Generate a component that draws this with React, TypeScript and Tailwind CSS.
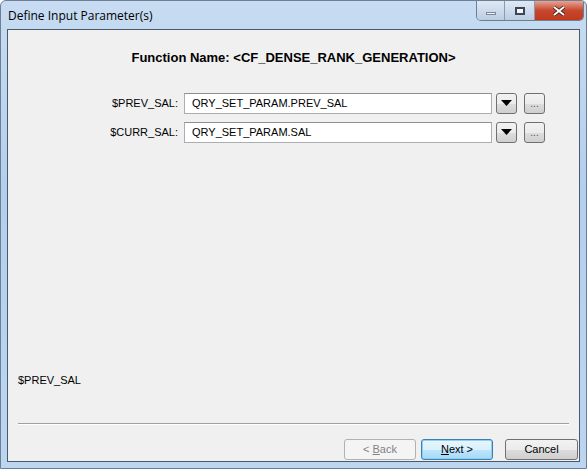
const ui = { fontFamily: '"Liberation Sans", Arial, sans-serif' };
const title = { fontFamily: '"Open Sans", "Noto Sans", sans-serif' };

function WinButton({
  children,
  width,
  variant = "normal",
}: {
  children: React.ReactNode;
  width: string;
  variant?: "normal" | "default" | "disabled";
}) {
  const styles = {
    normal:
      "border-[#707070] bg-[linear-gradient(to_bottom,#f2f2f2_0%,#ebebeb_50%,#dddddd_51%,#cfcfcf_100%)] text-black",
    default:
      "border-[#3c7fb1] bg-[linear-gradient(to_bottom,#eaf6fd_0%,#d9f0fc_50%,#bee6fd_51%,#a7d9f5_100%)] text-black shadow-[inset_0_0_0_1px_#8ed0f4]",
    disabled: "border-[#adb2b5] bg-[#f4f4f4] text-[#838383]",
  }[variant];
  return (
    <div
      className={`${width} h-[21px] flex items-center justify-center rounded-[3px] border text-[11px] ${styles}`}
    >
      {children}
    </div>
  );
}

function ParamRow({ label, value }: { label: string; value: string }) {
  return (
    <div className="flex items-center h-[21px]">
      <div className="w-[172px] text-right pr-[6px] text-[11px] text-black">{label}</div>
      <div className="w-[308px] h-[21px] flex items-center bg-white border border-[#abadb3] border-t-[#8e8f8f] px-[7px] text-[11px] text-black">
        {value}
      </div>
      <div className="ml-[4px] w-[21px] h-[21px] rounded-[3px] border border-[#707070] bg-[linear-gradient(to_bottom,#f2f2f2_0%,#ebebeb_50%,#dddddd_51%,#cfcfcf_100%)] flex items-center justify-center">
        <svg width="11" height="6" viewBox="0 0 11 6">
          <path d="M0 0 H11 L5.5 6 Z" fill="#000" />
        </svg>
      </div>
      <div className="ml-[7px] w-[21px] h-[21px] rounded-[3px] border border-[#707070] bg-[linear-gradient(to_bottom,#f2f2f2_0%,#ebebeb_50%,#dddddd_51%,#cfcfcf_100%)] flex items-end justify-center pb-[4px] text-[10px] leading-none text-[#555]">
        ...
      </div>
    </div>
  );
}

export default function App() {
  return (
    <div
      className="w-[587px] h-[469px] relative overflow-hidden rounded-t-[6px] bg-[linear-gradient(to_bottom,#c7dcf2_0%,#b3cfee_40%,#bcd6f1_100%)] border border-[#6d7f93]"
      style={ui}
    >
      {/* title bar */}
      <div className="h-[28px] flex items-start">
        <div className="pl-[7px] pt-[6px] text-[12px] text-black" style={title}>
          Define Input Parameter(s)
        </div>
        <div className="ml-auto mr-[2px] flex h-[20px] rounded-b-[5px] border border-t-0 border-[#6d7f93] overflow-hidden">
          <div className="w-[28px] h-full flex items-center justify-center bg-[linear-gradient(to_bottom,#dfe9f5,#bccde3)] border-r border-[#8a9bb0]">
            <div className="w-[10px] h-[3px] mt-[6px] bg-[#f4f6f9] border border-[#7a8798]" />
          </div>
          <div className="w-[30px] h-full flex items-center justify-center bg-[linear-gradient(to_bottom,#dfe9f5,#bccde3)] border-r border-[#8a9bb0]">
            <div className="w-[10px] h-[8px] border-[2px] border-[#3d4652] bg-[#f4f6f9]" />
          </div>
          <div className="w-[48px] h-full flex items-center justify-center bg-[linear-gradient(to_bottom,#e8a493,#c7482f_50%,#c1381c)]">
            <svg width="12" height="10" viewBox="0 0 12 10">
              <path d="M1 1 L11 9 M11 1 L1 9" stroke="#3b1a14" strokeWidth="3.4" />
              <path d="M1 1 L11 9 M11 1 L1 9" stroke="#fff" strokeWidth="2" />
            </svg>
          </div>
        </div>
      </div>

      {/* client area */}
      <div className="ml-[6px] w-[573px] h-[433px] border border-[#4b5a6b] bg-[#f0f0f0] flex flex-col">
        <div className="pt-[18px] text-center text-[13px] font-bold text-black">
          Function Name: &lt;CF_DENSE_RANK_GENERATION&gt;
        </div>
        <div className="mt-[25px] flex flex-col gap-[8px] pl-[4px]">
          <ParamRow label="$PREV_SAL:" value="QRY_SET_PARAM.PREV_SAL" />
          <ParamRow label="$CURR_SAL:" value="QRY_SET_PARAM.SAL" />
        </div>
        <div className="mt-auto pl-[10px] pb-[35px] text-[11px] text-black">$PREV_SAL</div>
        <div className="ml-[10px] mr-[10px] border-t border-[#a0a0a0] border-b border-b-white" />
        <div className="flex justify-end items-center gap-[5px] pr-[1px] pt-[14px] pb-[1px]">
          <WinButton width="w-[72px]" variant="disabled">
            &lt; <span className="underline ml-[3px]">B</span>ack
          </WinButton>
          <WinButton width="w-[72px]" variant="default">
            <span className="underline">N</span>ext &gt;
          </WinButton>
          <div className="w-[2px]" />
          <WinButton width="w-[73px]">Cancel</WinButton>
        </div>
      </div>
    </div>
  );
}
